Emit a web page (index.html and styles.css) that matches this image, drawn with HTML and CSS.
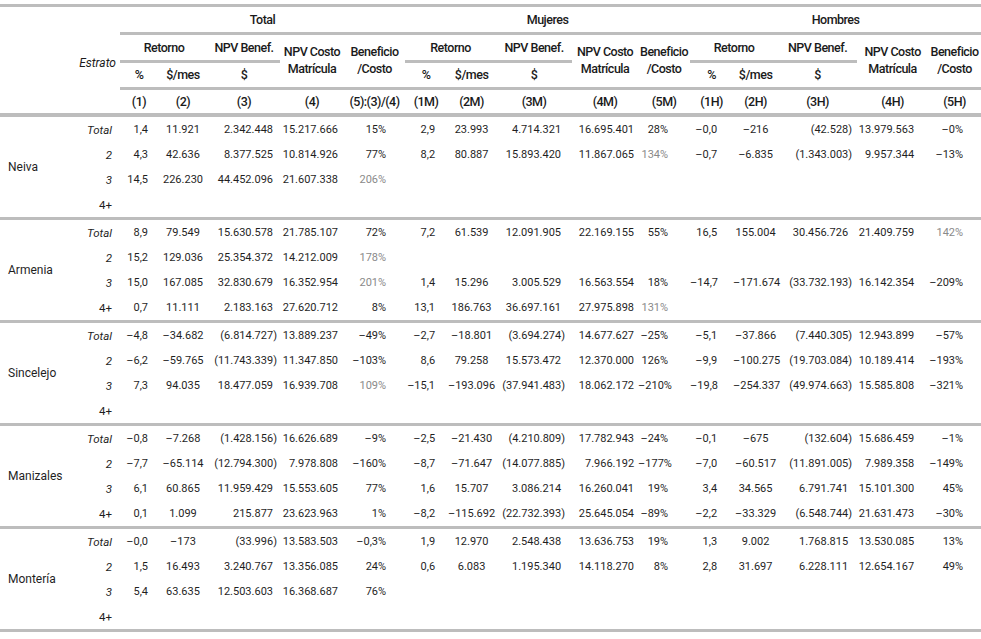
FILE: index.html
```html
<!DOCTYPE html>
<html lang="es">
<head>
<meta charset="utf-8">
<title>Retorno y beneficio/costo por estrato</title>
<link rel="stylesheet" href="styles.css">
</head>
<body>
<table class="tbl">
<colgroup>
<col style="width:72px"><col style="width:48px">
<col style="width:38px"><col style="width:50px"><col style="width:72px"><col style="width:64px"><col style="width:61px">
<col style="width:42px"><col style="width:49px"><col style="width:76px"><col style="width:66px"><col style="width:52px">
<col style="width:43px"><col style="width:45px"><col style="width:79px"><col style="width:71px"><col style="width:53px">
</colgroup>
<thead>
<tr class="hr1">
<th colspan="2" class="top"></th>
<th colspan="5" class="top ul">Total</th>
<th colspan="5" class="top ul">Mujeres</th>
<th colspan="5" class="top ul">Hombres</th>
</tr>
<tr class="hr2">
<th colspan="2" rowspan="2" class="estr">Estrato</th>
<th colspan="2" class="ul">Retorno</th>
<th class="ul">NPV Benef.</th>
<th rowspan="2" class="ul two">NPV Costo<br>Matrícula</th>
<th rowspan="2" class="ul two">Beneficio<br>/Costo</th>
<th colspan="2" class="ul">Retorno</th>
<th class="ul">NPV Benef.</th>
<th rowspan="2" class="ul two">NPV Costo<br>Matrícula</th>
<th rowspan="2" class="ul two">Beneficio<br>/Costo</th>
<th colspan="2" class="ul">Retorno</th>
<th class="ul">NPV Benef.</th>
<th rowspan="2" class="ul two">NPV Costo<br>Matrícula</th>
<th rowspan="2" class="ul two">Beneficio<br>/Costo</th>
</tr>
<tr class="hr3">
<th class="ul">%</th><th class="ul">$/mes</th><th class="ul">$</th>
<th class="ul">%</th><th class="ul">$/mes</th><th class="ul">$</th>
<th class="ul">%</th><th class="ul">$/mes</th><th class="ul">$</th>
</tr>
<tr class="hr4">
<th colspan="2"></th>
<th>(1)</th><th>(2)</th><th>(3)</th><th>(4)</th><th>(5):(3)/(4)</th>
<th>(1M)</th><th>(2M)</th><th>(3M)</th><th>(4M)</th><th>(5M)</th>
<th>(1H)</th><th>(2H)</th><th>(3H)</th><th>(4H)</th><th>(5H)</th>
</tr>
</thead>
<tbody>
<!-- Neiva -->
<tr><td class="pl" rowspan="4">Neiva</td><td class="es">Total</td><td>1,4</td><td>11.921</td><td>2.342.448</td><td>15.217.666</td><td>15%</td><td>2,9</td><td>23.993</td><td>4.714.321</td><td>16.695.401</td><td>28%</td><td>–0,0</td><td>–216</td><td class="p">(42.528)</td><td>13.979.563</td><td>–0%</td></tr>
<tr><td class="es">2</td><td>4,3</td><td>42.636</td><td>8.377.525</td><td>10.814.926</td><td>77%</td><td>8,2</td><td>80.887</td><td>15.893.420</td><td>11.867.065</td><td class="g">134%</td><td>–0,7</td><td>–6.835</td><td class="p">(1.343.003)</td><td>9.957.344</td><td>–13%</td></tr>
<tr><td class="es">3</td><td>14,5</td><td>226.230</td><td>44.452.096</td><td>21.607.338</td><td class="g">206%</td><td></td><td></td><td></td><td></td><td></td><td></td><td></td><td></td><td></td><td></td></tr>
<tr class="end"><td class="es up">4+</td><td></td><td></td><td></td><td></td><td></td><td></td><td></td><td></td><td></td><td></td><td></td><td></td><td></td><td></td><td></td></tr>
<!-- Armenia -->
<tr><td class="pl" rowspan="4">Armenia</td><td class="es">Total</td><td>8,9</td><td>79.549</td><td>15.630.578</td><td>21.785.107</td><td>72%</td><td>7,2</td><td>61.539</td><td>12.091.905</td><td>22.169.155</td><td>55%</td><td>16,5</td><td>155.004</td><td>30.456.726</td><td>21.409.759</td><td class="g">142%</td></tr>
<tr><td class="es">2</td><td>15,2</td><td>129.036</td><td>25.354.372</td><td>14.212.009</td><td class="g">178%</td><td></td><td></td><td></td><td></td><td></td><td></td><td></td><td></td><td></td><td></td></tr>
<tr><td class="es">3</td><td>15,0</td><td>167.085</td><td>32.830.679</td><td>16.352.954</td><td class="g">201%</td><td>1,4</td><td>15.296</td><td>3.005.529</td><td>16.563.554</td><td>18%</td><td>–14,7</td><td>–171.674</td><td class="p">(33.732.193)</td><td>16.142.354</td><td>–209%</td></tr>
<tr class="end"><td class="es up">4+</td><td>0,7</td><td>11.111</td><td>2.183.163</td><td>27.620.712</td><td>8%</td><td>13,1</td><td>186.763</td><td>36.697.161</td><td>27.975.898</td><td class="g">131%</td><td></td><td></td><td></td><td></td><td></td></tr>
<!-- Sincelejo -->
<tr><td class="pl" rowspan="4">Sincelejo</td><td class="es">Total</td><td>–4,8</td><td>–34.682</td><td class="p">(6.814.727)</td><td>13.889.237</td><td>–49%</td><td>–2,7</td><td>–18.801</td><td class="p">(3.694.274)</td><td>14.677.627</td><td>–25%</td><td>–5,1</td><td>–37.866</td><td class="p">(7.440.305)</td><td>12.943.899</td><td>–57%</td></tr>
<tr><td class="es">2</td><td>–6,2</td><td>–59.765</td><td class="p">(11.743.339)</td><td>11.347.850</td><td>–103%</td><td>8,6</td><td>79.258</td><td>15.573.472</td><td>12.370.000</td><td>126%</td><td>–9,9</td><td>–100.275</td><td class="p">(19.703.084)</td><td>10.189.414</td><td>–193%</td></tr>
<tr><td class="es">3</td><td>7,3</td><td>94.035</td><td>18.477.059</td><td>16.939.708</td><td class="g">109%</td><td>–15,1</td><td>–193.096</td><td class="p">(37.941.483)</td><td>18.062.172</td><td>–210%</td><td>–19,8</td><td>–254.337</td><td class="p">(49.974.663)</td><td>15.585.808</td><td>–321%</td></tr>
<tr class="end"><td class="es up">4+</td><td></td><td></td><td></td><td></td><td></td><td></td><td></td><td></td><td></td><td></td><td></td><td></td><td></td><td></td><td></td></tr>
<!-- Manizales -->
<tr><td class="pl" rowspan="4">Manizales</td><td class="es">Total</td><td>–0,8</td><td>–7.268</td><td class="p">(1.428.156)</td><td>16.626.689</td><td>–9%</td><td>–2,5</td><td>–21.430</td><td class="p">(4.210.809)</td><td>17.782.943</td><td>–24%</td><td>–0,1</td><td>–675</td><td class="p">(132.604)</td><td>15.686.459</td><td>–1%</td></tr>
<tr><td class="es">2</td><td>–7,7</td><td>–65.114</td><td class="p">(12.794.300)</td><td>7.978.808</td><td>–160%</td><td>–8,7</td><td>–71.647</td><td class="p">(14.077.885)</td><td>7.966.192</td><td>–177%</td><td>–7,0</td><td>–60.517</td><td class="p">(11.891.005)</td><td>7.989.358</td><td>–149%</td></tr>
<tr><td class="es">3</td><td>6,1</td><td>60.865</td><td>11.959.429</td><td>15.553.605</td><td>77%</td><td>1,6</td><td>15.707</td><td>3.086.214</td><td>16.260.041</td><td>19%</td><td>3,4</td><td>34.565</td><td>6.791.741</td><td>15.101.300</td><td>45%</td></tr>
<tr class="end"><td class="es up">4+</td><td>0,1</td><td>1.099</td><td>215.877</td><td>23.623.963</td><td>1%</td><td>–8,2</td><td>–115.692</td><td class="p">(22.732.393)</td><td>25.645.054</td><td>–89%</td><td>–2,2</td><td>–33.329</td><td class="p">(6.548.744)</td><td>21.631.473</td><td>–30%</td></tr>
<!-- Montería -->
<tr><td class="pl" rowspan="4">Montería</td><td class="es">Total</td><td>–0,0</td><td>–173</td><td class="p">(33.996)</td><td>13.583.503</td><td>–0,3%</td><td>1,9</td><td>12.970</td><td>2.548.438</td><td>13.636.753</td><td>19%</td><td>1,3</td><td>9.002</td><td>1.768.815</td><td>13.530.085</td><td>13%</td></tr>
<tr><td class="es">2</td><td>1,5</td><td>16.493</td><td>3.240.767</td><td>13.356.085</td><td>24%</td><td>0,6</td><td>6.083</td><td>1.195.340</td><td>14.118.270</td><td>8%</td><td>2,8</td><td>31.697</td><td>6.228.111</td><td>12.654.167</td><td>49%</td></tr>
<tr><td class="es">3</td><td>5,4</td><td>63.635</td><td>12.503.603</td><td>16.368.687</td><td>76%</td><td></td><td></td><td></td><td></td><td></td><td></td><td></td><td></td><td></td><td></td></tr>
<tr class="end"><td class="es up">4+</td><td></td><td></td><td></td><td></td><td></td><td></td><td></td><td></td><td></td><td></td><td></td><td></td><td></td><td></td><td></td></tr>
</tbody>
</table>
</body>
</html>
```

FILE: styles.css
```css
html, body {
  margin: 0;
  padding: 0;
  background: #ffffff;
}
body {
  padding-top: 4px;
  font-family: Roboto, "Liberation Sans", sans-serif;
  color: #1f1f1f;
}
.tbl {
  width: 981px;
  table-layout: fixed;
  border-collapse: separate;
  border-spacing: 0;
}
.tbl th, .tbl td {
  padding: 0;
  margin: 0;
  box-sizing: border-box;
  vertical-align: middle;
  white-space: nowrap;
  overflow: visible;
}
/* header */
.tbl th {
  font-size: 12.5px;
  font-weight: 500;
  letter-spacing: -0.5px;
  text-align: center;
  line-height: 16px;
  color: #1a1a1a;
}
.tbl th.top {
  border-top: 3px solid #bdbdbd;
}
.tbl th.ul {
  border-bottom: 3px solid #bdbdbd;
}
.hr1 th { height: 31px; }
.hr2 th { height: 28px; }
.hr3 th { height: 27px; }
.hr4 th {
  height: 27px;
  border-bottom: 4px solid #bdbdbd;
}
.tbl th.two {
  line-height: 17px;
  padding-bottom: 2px;
}
.tbl th.estr {
  text-align: right;
  padding-right: 4px;
  font-style: italic;
  font-weight: 400;
  letter-spacing: 0;
  font-size: 12px;
}
/* body */
.tbl td {
  height: 25px;
  font-size: 11px;
  text-align: right;
  line-height: 14px;
}
.tbl tr.end td {
  height: 28px;
  border-bottom: 3px solid #bdbdbd;
}
.tbl td.pl {
  text-align: left;
  padding-left: 8px;
  font-size: 12px;
  border-bottom: 3px solid #bdbdbd;
}
.tbl td.es {
  font-style: italic;
  font-size: 11.5px;
  padding-right: 8px;
}
.tbl td.es.up {
  font-style: normal;
}
.tbl td.g { color: #8a8a8a; }

/* data columns counted from the right */
.tbl td:nth-last-child(15) { padding-right: 10px; }
.tbl td:nth-last-child(14) { text-align: center; padding-right: 0; }
.tbl td:nth-last-child(13) { padding-right: 7px; }
.tbl td:nth-last-child(13).p { padding-right: 3px; }
.tbl td:nth-last-child(12) { padding-right: 6px; }
.tbl td:nth-last-child(11) { padding-right: 19px; }
.tbl td:nth-last-child(10) { padding-right: 12px; }
.tbl td:nth-last-child(9) { text-align: center; padding-right: 0; }
.tbl td:nth-last-child(8) { padding-right: 11px; }
.tbl td:nth-last-child(8).p { padding-right: 7px; }
.tbl td:nth-last-child(7) { padding-right: 4px; }
.tbl td:nth-last-child(6) { padding-right: 22px; }
.tbl td:nth-last-child(5) { padding-right: 16px; }
.tbl td:nth-last-child(4) { text-align: center; padding-right: 0; }
.tbl td:nth-last-child(3) { padding-right: 9px; }
.tbl td:nth-last-child(3).p { padding-right: 5px; }
.tbl td:nth-last-child(2) { padding-right: 14px; }
.tbl td:nth-last-child(1) { padding-right: 18px; }
```
